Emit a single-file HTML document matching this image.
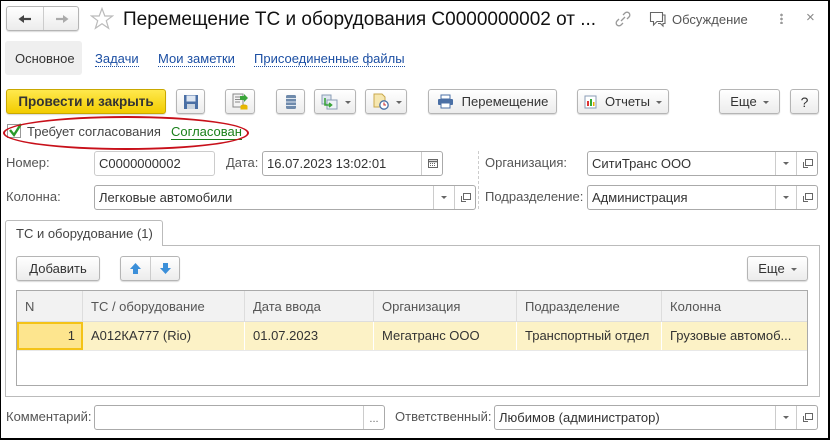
<!DOCTYPE html>
<html><head><meta charset="utf-8"><style>
*{box-sizing:border-box;margin:0;padding:0}
body{width:830px;height:440px;overflow:hidden;background:#fff;font-family:"Liberation Sans",Arial,sans-serif;font-size:13px;color:#333;position:relative}
.frame{position:absolute;left:0;top:0;width:830px;height:440px;border:1px solid #000;border-right-width:2px;border-bottom-width:2px;pointer-events:none}
.a{position:absolute;white-space:nowrap}
.btn{position:absolute;border:1px solid #b5b5b5;border-radius:3px;background:linear-gradient(#fff,#ececec);box-shadow:0 1px 1px rgba(0,0,0,.15);height:25px;display:flex;align-items:center;justify-content:center;color:#333}
.inp{position:absolute;border:1px solid #aaa;border-radius:3px;background:#fff;height:25px;padding-left:4px;line-height:23px;color:#333}
.lbl{position:absolute;color:#555;line-height:16px}
.lnk{position:absolute;color:#1c4fa3;border-bottom:1px dotted #1c4fa3;line-height:15px}
.dd{position:absolute;top:0;bottom:0;border-left:1px solid #ccc;width:21px}
.dd.arrow::after{content:"";position:absolute;left:7px;top:10px;border:3px solid transparent;border-top:3.5px solid #666}
.dd.open::after{content:"";position:absolute;left:8px;top:7px;width:6px;height:5px;border:1px solid #666}
.dd.open::before{content:"";position:absolute;left:6px;top:10px;width:4px;height:5px;border-left:1px solid #666;border-bottom:1px solid #666}
.tri{display:inline-block;border:3px solid transparent;border-top:3.5px solid #666;margin-left:6px;margin-top:4px}
.th{position:absolute;top:291px;height:31px;line-height:31px;color:#555;padding-left:8px;border-right:1px solid #ddd}
.td{position:absolute;top:322px;height:28px;line-height:28px;color:#333;padding-left:8px;border-right:1px solid #fff}
</style></head><body>
<div class="btn" style="left:6px;top:6px;width:73px;height:25px;justify-content:flex-start">
 <div style="position:absolute;left:36px;top:0;bottom:0;border-left:1px solid #ccc"></div>
 <svg class="a" style="left:11px;top:7px" width="14" height="10"><path d="M2 5H13" stroke="#444" stroke-width="2.2"/><path d="M0.5 5L6 1V9Z" fill="#444"/></svg>
 <svg class="a" style="left:48px;top:7px" width="14" height="10"><path d="M12 5H1" stroke="#aaa" stroke-width="2.2"/><path d="M13.5 5L8 1V9Z" fill="#aaa"/></svg>
</div>
<svg class="a" style="left:90px;top:7px" width="24" height="23"><path d="M12 1.5L14.8 9H22.5L16.3 13.7L18.6 21.3L12 16.7L5.4 21.3L7.7 13.7L1.5 9H9.2Z" fill="none" stroke="#bbb" stroke-width="1.2"/></svg>
<div class="a" style="left:123px;top:8px;font-size:19px;color:#111;line-height:23px">Перемещение ТС и оборудования С0000000002 от ...</div>
<svg class="a" style="left:614px;top:10px" width="18" height="18"><path d="M7 11L11 7M9 5L11 3A2.8 2.8 0 0 1 15 7L13 9M9 13L7 15A2.8 2.8 0 0 1 3 11L5 9" stroke="#999" stroke-width="1.3" fill="none"/></svg>
<svg class="a" style="left:649px;top:11px" width="18" height="17"><path d="M1.5 1.5H13.5V10.5H8L4.5 14V10.5H1.5ZM13.5 4H16V12.5H14V15L11.5 12.5H9" stroke="#666" stroke-width="1.1" fill="none"/></svg>
<div class="a" style="left:672px;top:12px;color:#555">Обсуждение</div>
<div class="a" style="left:780px;top:13px;width:3px;height:11px;background:radial-gradient(circle,#999 1.2px,transparent 1.5px) 0 0/3px 4px"></div>
<div class="a" style="left:806px;top:9px;color:#888;font-size:15px">×</div>
<div class="a" style="left:5px;top:41px;width:77px;height:34px;background:#efefef;border-radius:3px"></div>
<div class="a" style="left:15px;top:51px;color:#333">Основное</div>
<div class="lnk" style="left:95px;top:51px">Задачи</div>
<div class="lnk" style="left:158px;top:51px">Мои заметки</div>
<div class="lnk" style="left:254px;top:51px">Присоединенные файлы</div>
<div class="btn" style="left:6px;top:89px;width:160px;background:linear-gradient(#ffe94d,#f2cc00);border-color:#c9a800;font-weight:bold;color:#333;font-size:13.5px">Провести и закрыть</div>
<div class="btn" style="left:176px;top:89px;width:29px"><svg width="16" height="16"><rect x="1" y="1" width="14" height="14" fill="#4a6fa5"/><rect x="3.5" y="1.5" width="9" height="6" fill="#dde6f2"/><rect x="4" y="10" width="8" height="5" fill="#c9d3df"/></svg></div>
<div class="btn" style="left:225px;top:89px;width:30px"><svg width="18" height="18"><rect x="2" y="1" width="10" height="13" fill="#f4f4f4" stroke="#888"/><path d="M4 4H10M4 6.5H10M4 9H9" stroke="#888"/><path d="M9 3H13V1L17 5L13 9V7H9Z" fill="#3aa53a"/><ellipse cx="13" cy="13" rx="3.5" ry="1.5" fill="#e2b100"/><rect x="9.5" y="13" width="7" height="3.5" fill="#e8b800"/></svg></div>
<div class="btn" style="left:276px;top:89px;width:29px"><svg width="12" height="16"><rect x="1" y="1" width="10" height="14" rx="1.5" fill="#6f8aab"/><path d="M1 4.5H11M1 8H11M1 11.5H11" stroke="#dfe7f0"/></svg></div>
<div class="btn" style="left:314px;top:89px;width:42px;justify-content:flex-start;padding-left:6px"><svg width="18" height="16"><rect x="1" y="1" width="9" height="9" fill="#dfe7f0" stroke="#8a9cb5"/><rect x="6" y="6" width="10" height="9" fill="#eef3f8" stroke="#8a9cb5"/><path d="M4 4V11H10M8 9L10.5 11L8 13" stroke="#3aa53a" stroke-width="1.6" fill="none"/></svg><span class="tri"></span></div>
<div class="btn" style="left:365px;top:89px;width:42px;justify-content:flex-start;padding-left:6px"><svg width="18" height="17"><path d="M2 1H10L13 4V14H2Z" fill="#f6e7b0" stroke="#c9a84d"/><circle cx="12" cy="12" r="4.2" fill="#fff" stroke="#4a6fa5" stroke-width="1.3"/><path d="M12 9.5V12H14" stroke="#c33" stroke-width="1.1" fill="none"/></svg><span class="tri"></span></div>
<div class="btn" style="left:428px;top:89px;width:129px"><svg width="17" height="15" style="margin-right:8px"><rect x="4" y="1" width="9" height="4" fill="#fff" stroke="#4a6fa5"/><rect x="1" y="5" width="15" height="6" rx="1" fill="#4a6fa5"/><rect x="4" y="9" width="9" height="5" fill="#fff" stroke="#4a6fa5"/></svg>Перемещение</div>
<div class="btn" style="left:577px;top:89px;width:92px"><svg width="13" height="14" style="margin-right:8px"><rect x="1" y="1" width="11" height="12" fill="#fff" stroke="#8a9cb5"/><rect x="3" y="6" width="2" height="5" fill="#d33"/><rect x="6" y="4" width="2" height="7" fill="#3a3"/><rect x="9" y="7" width="1.5" height="4" fill="#e8a800"/></svg>Отчеты<span class="tri"></span></div>
<div class="btn" style="left:719px;top:89px;width:61px">Еще<span class="tri"></span></div>
<div class="btn" style="left:790px;top:89px;width:29px;font-size:14px">?</div>
<div class="a" style="left:7px;top:124px;width:14px;height:14px;border:1px solid #999;background:#fff"></div>
<svg class="a" style="left:7px;top:122px" width="16" height="16"><path d="M3 8L7 13L14 2" stroke="#2a9a2a" stroke-width="2.4" fill="none"/></svg>
<div class="a" style="left:27px;top:124px;color:#444">Требует согласования</div>
<div class="a" style="left:171px;top:124px;color:#1a7f1a;border-bottom:1px solid #1a7f1a;line-height:15px">Согласован</div>
<div class="a" style="left:3px;top:116px;width:246px;height:34px;border:2.5px solid #c8101a;border-radius:50%"></div>
<div class="lbl" style="left:6px;top:155px">Номер:</div>
<div class="inp" style="left:94px;top:151px;width:121px;border-color:#ccc">С0000000002</div>
<div class="lbl" style="left:226px;top:155px">Дата:</div>
<div class="inp" style="left:262px;top:151px;width:181px">16.07.2023 13:02:01<div class="dd" style="right:0"><svg class="a" style="left:6px;top:6px" width="10" height="10"><rect x="0.5" y="1.5" width="9" height="8" fill="none" stroke="#666"/><path d="M0.5 3.5H9.5" stroke="#666" stroke-width="1.5"/><path d="M2 5.5H8M2 7.5H8" stroke="#666" stroke-dasharray="1 1"/></svg></div></div>
<div class="a" style="left:478px;top:151px;height:58px;border-left:1px dashed #ccc"></div>
<div class="lbl" style="left:485px;top:155px">Организация:</div>
<div class="inp" style="left:587px;top:151px;width:231px">СитиТранс ООО<div class="dd arrow" style="right:21px"></div><div class="dd open" style="right:0"></div></div>
<div class="lbl" style="left:6px;top:189px">Колонна:</div>
<div class="inp" style="left:94px;top:185px;width:382px">Легковые автомобили<div class="dd arrow" style="right:21px"></div><div class="dd open" style="right:0"></div></div>
<div class="lbl" style="left:485px;top:189px">Подразделение:</div>
<div class="inp" style="left:587px;top:185px;width:231px">Администрация<div class="dd arrow" style="right:21px"></div><div class="dd open" style="right:0"></div></div>
<div class="a" style="left:5px;top:245px;width:815px;height:152px;border:1px solid #bbb"></div>
<div class="a" style="left:5px;top:220px;width:158px;height:26px;border:1px solid #bbb;border-bottom:none;border-radius:3px 3px 0 0;background:#fff;padding:5px 0 0 10px;color:#444">ТС и оборудование (1)</div>
<div class="btn" style="left:16px;top:256px;width:84px">Добавить</div>
<div class="btn" style="left:120px;top:256px;width:60px"><div style="position:absolute;left:29px;top:0;bottom:0;border-left:1px solid #ccc"></div>
<svg class="a" style="left:8px;top:5px" width="13" height="13"><path d="M6.5 1L12 7H9V12H4V7H1Z" fill="#3b8fd9"/></svg>
<svg class="a" style="left:38px;top:5px" width="13" height="13"><path d="M6.5 12L12 6H9V1H4V6H1Z" fill="#3b8fd9"/></svg></div>
<div class="btn" style="left:747px;top:256px;width:61px">Еще<span class="tri"></span></div>
<div class="a" style="left:16px;top:290px;width:792px;height:96px;border:1px solid #aaa"></div>
<div class="a" style="left:17px;top:291px;width:790px;height:31px;background:#f2f2f2;border-bottom:1px solid #ddd"></div>
<div class="th" style="left:17px;width:66px">N</div>
<div class="th" style="left:83px;width:162px">ТС / оборудование</div>
<div class="th" style="left:245px;width:129px">Дата ввода</div>
<div class="th" style="left:374px;width:143px">Организация</div>
<div class="th" style="left:517px;width:145px">Подразделение</div>
<div class="th" style="left:662px;width:145px;border:none">Колонна</div>
<div class="a" style="left:17px;top:322px;width:790px;height:29px;background:#fcf2c6;border-bottom:1px solid #e8e8e8"></div>
<div class="td" style="left:17px;width:66px;background:#fde58e;border:2px solid #f4c317;text-align:right;padding-right:6px;line-height:24px">1</div>
<div class="td" style="left:83px;width:162px">А012КА777 (Rio)</div>
<div class="td" style="left:245px;width:129px">01.07.2023</div>
<div class="td" style="left:374px;width:143px">Мегатранс ООО</div>
<div class="td" style="left:517px;width:145px">Транспортный отдел</div>
<div class="td" style="left:662px;width:145px;border:none">Грузовые автомоб...</div>
<div class="lbl" style="left:6px;top:409px">Комментарий:</div>
<div class="inp" style="left:94px;top:405px;width:291px"><div class="dd" style="right:0;text-align:center;line-height:26px;color:#666;font-size:11px">...</div></div>
<div class="lbl" style="left:395px;top:409px">Ответственный:</div>
<div class="inp" style="left:494px;top:405px;width:324px">Любимов (администратор)<div class="dd arrow" style="right:21px"></div><div class="dd open" style="right:0"></div></div>
<div class="frame"></div>
</body></html>
